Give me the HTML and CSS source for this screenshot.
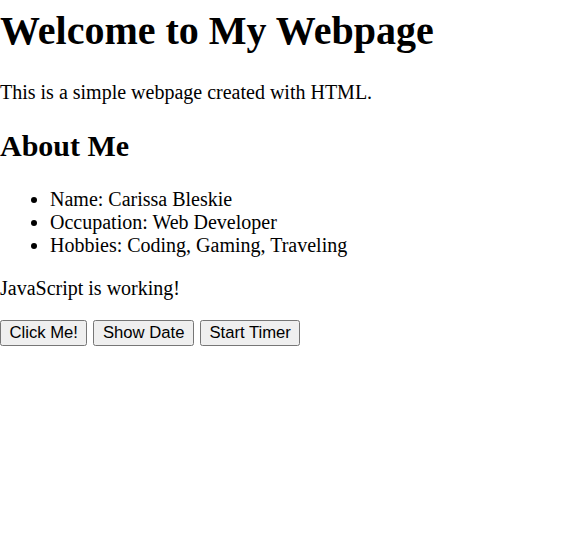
FILE: index.html
```html
<!DOCTYPE html>
<html>
<head>
<meta charset="utf-8">
<title>My Webpage</title>
<link rel="stylesheet" href="styles.css">
</head>
<body class="page">
<h1 class="title">Welcome to My Webpage</h1>
<p class="text">This is a simple webpage created with HTML.</p>
<h2 class="subtitle">About Me</h2>
<ul class="list">
<li>Name: Carissa Bleskie</li>
<li>Occupation: Web Developer</li>
<li>Hobbies: Coding, Gaming, Traveling</li>
</ul>
<p class="text">JavaScript is working!</p>
<div class="buttons">
<button class="btn">Click Me!</button>
<button class="btn">Show Date</button>
<button class="btn">Start Timer</button>
</div>
</body>
</html>
```
FILE: styles.css
```css
html { background: #fff; }
.page {
  margin: 0;
  padding-top: 8px;
  font-family: "Liberation Serif", "Times New Roman", serif;
  font-size: 20px;
  color: #000;
}
.title {
  font-size: 40px;
  font-weight: bold;
  margin: 0 0 26.8px;
  line-height: 46px;
}
.text {
  margin: 20px 0;
  line-height: 23px;
}
.subtitle {
  font-size: 30px;
  font-weight: bold;
  margin: 24.9px 0;
  line-height: 34px;
}
.list {
  margin: 20px 0;
  padding-left: 50px;
  line-height: 23px;
}
.buttons {
  display: flex;
  gap: 6px;
  margin-top: 20px;
}
.btn {
  font-family: "Liberation Sans", Arial, sans-serif;
  font-size: 16.67px;
  height: 26px;
  padding: 0 8.5px;
  background: #efefef;
  border: 1px solid #767676;
  border-radius: 2.5px;
  color: #000;
  margin: 0;
}
```
